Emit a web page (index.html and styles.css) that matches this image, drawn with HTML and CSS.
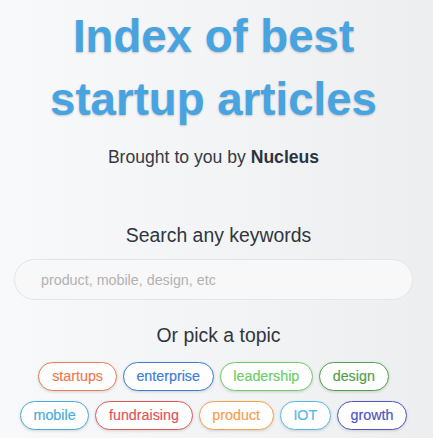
FILE: index.html
```html
<!DOCTYPE html>
<html>
<head>
<meta charset="utf-8">
<title>Index of best startup articles</title>
<link rel="stylesheet" href="styles.css">
</head>
<body>
<main class="page">
  <h1 class="title">Index of best<br>startup articles</h1>
  <p class="byline">Brought to you by <strong>Nucleus</strong></p>
  <p class="label label-search">Search any keywords</p>
  <input class="search" type="text" placeholder="product, mobile, design, etc">
  <p class="label label-topic">Or pick a topic</p>
  <div class="tags">
    <span class="tag t-startups">startups</span>
    <span class="tag t-enterprise">enterprise</span>
    <span class="tag t-leadership">leadership</span>
    <span class="tag t-design">design</span>
  </div>
  <div class="tags">
    <span class="tag t-mobile">mobile</span>
    <span class="tag t-fundraising">fundraising</span>
    <span class="tag t-product">product</span>
    <span class="tag t-iot">IOT</span>
    <span class="tag t-growth">growth</span>
  </div>
</main>
</body>
</html>
```

FILE: styles.css
```css
html, body {
  margin: 0;
  padding: 0;
}
body {
  width: 433px;
  height: 438px;
  overflow: hidden;
  background: linear-gradient(to right, #f8f9fa 0%, #f3f4f6 50%, #eceef0 100%);
  font-family: "Liberation Sans", Arial, sans-serif;
}
.page {
  width: 427px;
  display: flex;
  flex-direction: column;
  align-items: center;
  text-align: center;
}
.title {
  margin: 5px 0 0;
  font-size: 45.6px;
  line-height: 63px;
  font-weight: 700;
  color: #47a4e1;
  text-shadow: 0 1px 2px rgba(60, 40, 40, 0.25);
  white-space: nowrap;
}
.byline {
  margin: 15px 0 0;
  font-size: 17.6px;
  line-height: 22px;
  color: #343b42;
}
.byline strong {
  color: #2b3540;
}
.label {
  margin: 0;
  font-size: 19.4px;
  line-height: 24px;
  color: #30363c;
  padding-left: 10px;
}
.label-search {
  margin-top: 55px;
}
.search {
  margin-top: 12px;
  box-sizing: border-box;
  width: 399px;
  height: 41px;
  border: 1px solid #e3e5e7;
  border-radius: 21px;
  background: #f8f8f8;
  padding: 0 0 0 26px;
  font-family: "Liberation Sans", Arial, sans-serif;
  font-size: 14.3px;
  color: #555;
  outline: none;
}
.search::placeholder {
  color: #b2b2b2;
}
.label-topic {
  margin-top: 23px;
}
.tags {
  display: flex;
  justify-content: center;
  gap: 6px;
  margin-top: 15px;
}
.tags + .tags {
  margin-top: 10px;
}
.tag {
  flex: none;
  box-sizing: border-box;
  height: 29px;
  line-height: 26px;
  padding: 0 12.7px;
  border: 1.5px solid currentColor;
  border-radius: 15px;
  background: #fff;
  box-shadow: 0 1px 3px rgba(0, 0, 0, 0.14);
  font-size: 14.3px;
  white-space: nowrap;
  -webkit-text-stroke: 0.2px currentColor;
}
.t-startups { color: #ee7a52; }
.t-enterprise { color: #3d7cd4; }
.t-leadership { color: #6ccd6c; }
.t-design { color: #52a04c; }
.t-mobile { color: #49abe0; }
.t-fundraising { color: #e15757; }
.t-product { color: #f4a050; }
.t-iot { color: #58b7ea; }
.t-growth { color: #4c58c4; }
```
